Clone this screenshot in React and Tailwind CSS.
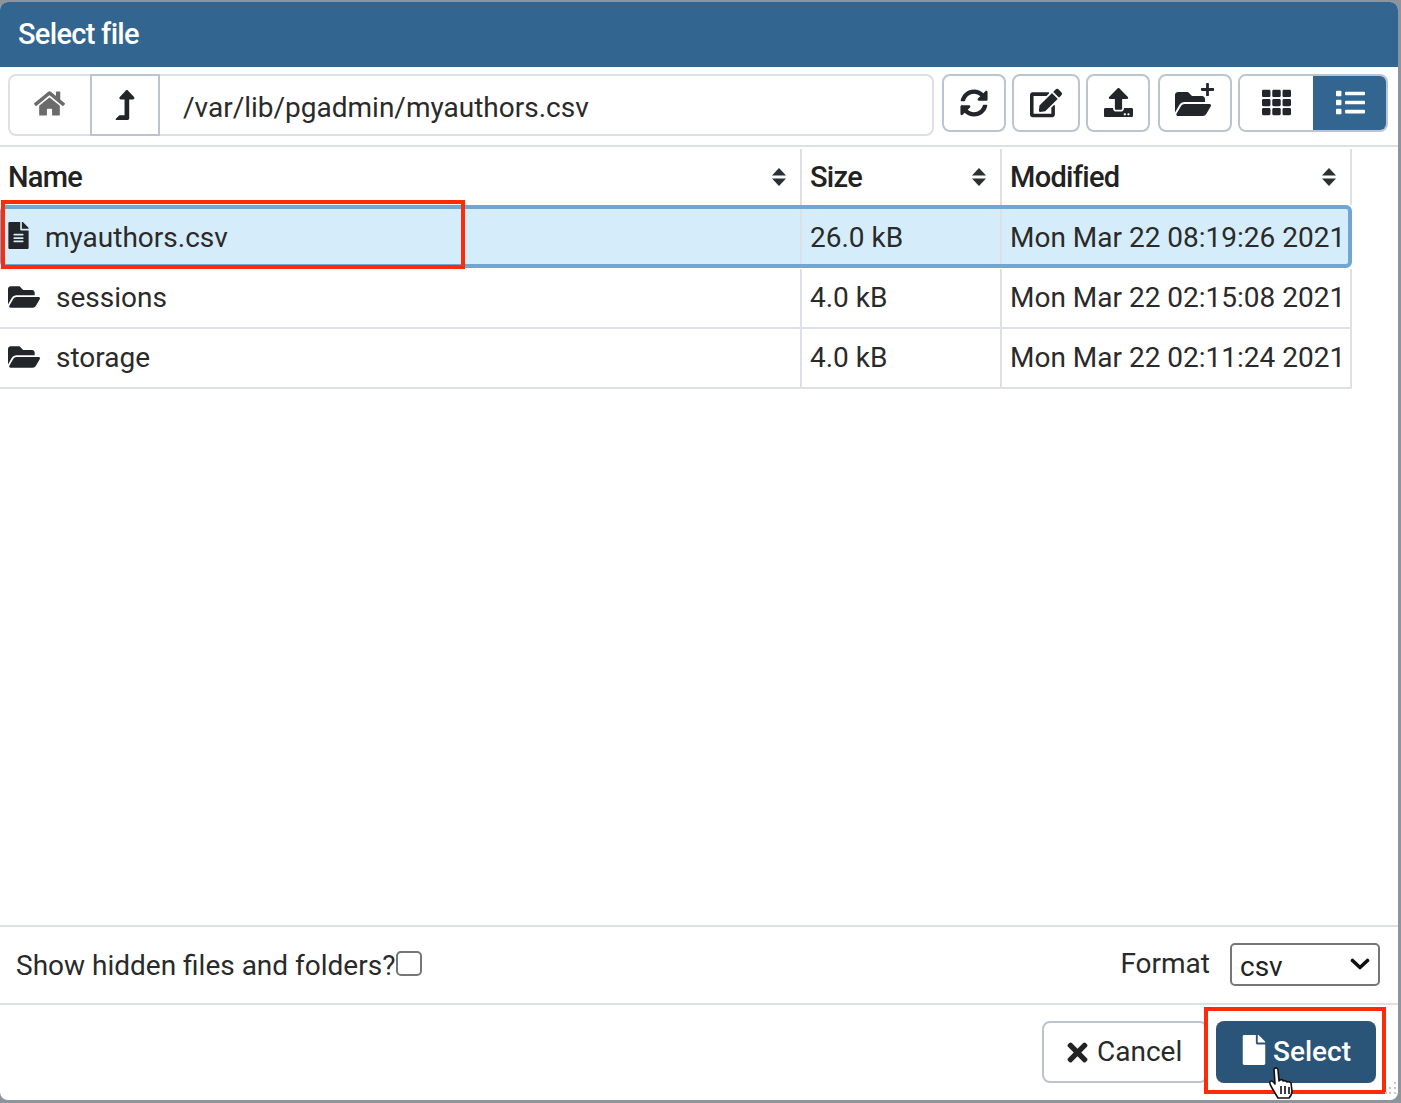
import { FaHome, FaLevelUpAlt, FaSyncAlt, FaEdit, FaUpload, FaFolderOpen, FaTh, FaList, FaFileAlt, FaFile, FaTimes, FaPlus } from "react-icons/fa";

const files = [
  { name: "sessions", size: "4.0 kB", modified: "Mon Mar 22 02:15:08 2021" },
  { name: "storage", size: "4.0 kB", modified: "Mon Mar 22 02:11:24 2021" },
];

function SortIcon() {
  return (
    <svg width="16" height="20" viewBox="0 0 16 20" fill="#2b3035">
      <path d="M8 1 15 8.6H1Z" />
      <path d="M8 19 15 11.4H1Z" />
    </svg>
  );
}

function HeaderCell({ label, className }) {
  return (
    <div className={`flex items-center justify-between shrink-0 pl-2 pr-[13px] h-full border-r-2 border-[#dde0e6] ${className}`}>
      <span className="pt-[2px] text-[29px] font-medium tracking-[-0.7px] text-[#222]">{label}</span>
      <SortIcon />
    </div>
  );
}

function ToolButton({ width, children }) {
  return (
    <button className={`flex items-center justify-center h-[58px] rounded-lg border-2 border-[#bcc3d1] bg-white text-[#222529] ${width}`}>
      {children}
    </button>
  );
}

export default function App() {
  return (
    <div className="relative w-[1401px] h-[1103px] overflow-hidden bg-[#8d949c] pt-[2px] pr-[3px] pb-[3px] font-['Roboto',sans-serif] text-[#222529]">
      <div className="flex flex-col h-full bg-white rounded-lg overflow-hidden">
        {/* Title bar */}
        <div className="flex items-center h-[65px] shrink-0 pl-[18px] bg-[#326690] text-white text-[29px] font-medium tracking-[-0.7px]">
          Select file
        </div>

        {/* Toolbar */}
        <div className="flex items-center h-[80px] shrink-0 pl-2 pr-[10px] pt-[1px] pb-[4px] gap-[8px] border-b-2 border-[#dde0e6]">
          <div className="flex flex-1 h-[62px] rounded-lg border-2 border-[#dde0e6]">
            <div className="flex items-center justify-center w-[80px] h-full text-[#6b6b6b]">
              <FaHome className="text-[31px] -mt-[3px] -ml-[1px]" />
            </div>
            <div className="flex items-center justify-center w-[70px] h-[62px] border-2 border-[#bcc3d1] -my-[2px] text-[#222529]">
              <FaLevelUpAlt className="text-[30px] mt-[1px]" />
            </div>
            <div className="flex items-center pl-[23px] pt-[6px] text-[28px] text-[#2a2a2a] whitespace-nowrap">/var/lib/pgadmin/myauthors.csv</div>
          </div>
          <div className="flex items-center gap-[6px] -mt-[4px]">
            <ToolButton width="w-[64px]"><FaSyncAlt className="text-[28px] -ml-[1px]" /></ToolButton>
            <ToolButton width="w-[68px]"><FaEdit className="text-[32px] -ml-[1px]" /></ToolButton>
            <ToolButton width="w-[64px]"><FaUpload className="text-[29px]" /></ToolButton>
            <div className="ml-[2px]">
              <ToolButton width="w-[74px]">
                <span className="relative flex -ml-[5px]">
                  <FaFolderOpen className="text-[36px] mt-[3px]" />
                  <FaPlus className="absolute -right-[4px] -top-[1px] text-[15px]" />
                </span>
              </ToolButton>
            </div>
            <div className="flex h-[58px] w-[150px] rounded-lg border-2 border-[#bcc3d1] overflow-hidden">
              <div className="flex flex-1 items-center justify-center bg-white"><FaTh className="text-[29px] -ml-[1px]" /></div>
              <div className="flex w-[73px] items-center justify-center bg-[#326690] text-white"><FaList className="text-[29px] ml-[1px]" /></div>
            </div>
          </div>
        </div>

        {/* File table */}
        <div className="flex-1 w-[1352px] whitespace-nowrap">
          <div className="flex h-[56px] mt-[2px]">
            <HeaderCell label="Name" className="w-[802px]" />
            <HeaderCell label="Size" className="w-[200px]" />
            <HeaderCell label="Modified" className="w-[350px]" />
          </div>
          <div className="flex items-center h-[63px] mb-[1px] border-[4px] border-[#70a7d2] rounded-md bg-[#d5edfb] text-[28px] text-[#2a2a2a]">
            <div className="flex items-center shrink-0 h-full w-[798px] pl-[4px] border-r-2 border-[#dde0e6]">
              <FaFileAlt className="text-[#222529] text-[27px] -mt-[3px] w-[21px]" />
              <span className="ml-[16px] pt-[2px]">myauthors.csv</span>
            </div>
            <div className="flex items-center shrink-0 h-full w-[200px] pl-2 pt-[2px] border-r-2 border-[#dde0e6]">26.0 kB</div>
            <div className="flex items-center h-full pl-2 pt-[2px]">Mon Mar 22 08:19:26 2021</div>
          </div>
          {files.map((file) => (
            <div key={file.name} className="flex items-center h-[60px] border-b-2 border-[#dde0e6] text-[28px] text-[#2a2a2a]">
              <div className="flex items-center shrink-0 h-full w-[802px] pl-2 border-r-2 border-[#dde0e6]">
                <FaFolderOpen className="text-[#222529] text-[32px] -mt-[3px]" />
                <span className="ml-[16px]">{file.name}</span>
              </div>
              <div className="flex items-center shrink-0 h-full w-[200px] pl-2 border-r-2 border-[#dde0e6]">{file.size}</div>
              <div className="flex items-center shrink-0 h-full w-[350px] pl-2 border-r-2 border-[#dde0e6]">{file.modified}</div>
            </div>
          ))}
        </div>

        {/* Options row */}
        <div className="flex items-center justify-between h-[80px] shrink-0 pl-4 pr-[18px] border-t-2 border-b-2 border-[#dde0e6] text-[28px] text-[#2a2a2a]">
          <div className="flex items-center">
            <span className="pt-[2px]">Show hidden files and folders?</span>
            <span className="w-[26px] h-[25px] ml-[1px] -mt-[4px] rounded-[5px] border-2 border-[#767676] bg-white" />
          </div>
          <div className="flex items-center gap-[20px]">
            <span className="-mt-[3px]">Format</span>
            <div className="flex items-center justify-between w-[150px] h-[43px] -mt-[2px] pl-[8px] pr-[8px] rounded-[5px] border-2 border-[#767676] text-[#222]">
              <span className="pt-[5px]">csv</span>
              <svg width="20" height="12" viewBox="0 0 20 12" fill="none" stroke="#111" strokeWidth="3.6" strokeLinecap="round" strokeLinejoin="round">
                <path d="M2.5 2.5 10 9.5 17.5 2.5" />
              </svg>
            </div>
          </div>
        </div>

        {/* Actions */}
        <div className="flex items-start justify-end h-[95px] shrink-0 pt-[16px] pr-[22px] gap-[8px] text-[28px]">
          <button className="flex items-center w-[166px] h-[62px] pl-[19px] rounded-lg border-2 border-[#bcc3d1] bg-white text-[#2a2a2a]">
            <FaTimes className="text-[29px] mr-[5px] text-[#222]" />
            <span>Cancel</span>
          </button>
          <button className="flex items-center w-[160px] h-[62px] pl-[23px] rounded-lg bg-[#2a5578] text-white font-medium">
            <FaFile className="text-[30px] mr-[4px] -mt-[4px]" />
            <span>Select</span>
          </button>
        </div>
      </div>

      {/* Annotation boxes */}
      <div className="absolute left-[1px] top-[200px] w-[464px] h-[69px] border-[4px] border-[#fb2c0a]" />
      <div className="absolute left-[1204px] top-[1007px] w-[182px] h-[87px] border-[4px] border-[#fb2c0a]" />

      {/* Pointer cursor */}
      <svg className="absolute left-[1266px] top-[1066px]" width="32" height="38" viewBox="0 0 30 38" fill="#fff" stroke="#111" strokeWidth="1.6" strokeLinejoin="round">
        <path d="M7 3c1.5-2 4-1 4 1l1 11 1-1c2-1 3 0 3 1 2-1 3 0 4 1 2-1 3 0 4 1l1 8c0 3-1 5-3 7H11l-6-10c-1-2-3-5-2-6 1-2 3-1 5 2Z" />
        <path d="M14 20v8M18 20v8M22 21v7" fill="none" />
      </svg>

      {/* Resize grip */}
      <svg className="absolute left-[1384px] top-[1080px]" width="16" height="20" viewBox="0 0 16 20" fill="#c4c8ce">
        <rect x="10" y="2" width="2" height="2" /><rect x="5" y="7" width="2" height="2" /><rect x="10" y="7" width="2" height="2" />
        <rect x="1" y="12" width="2" height="2" /><rect x="5" y="12" width="2" height="2" /><rect x="10" y="12" width="2" height="2" />
      </svg>
    </div>
  );
}
